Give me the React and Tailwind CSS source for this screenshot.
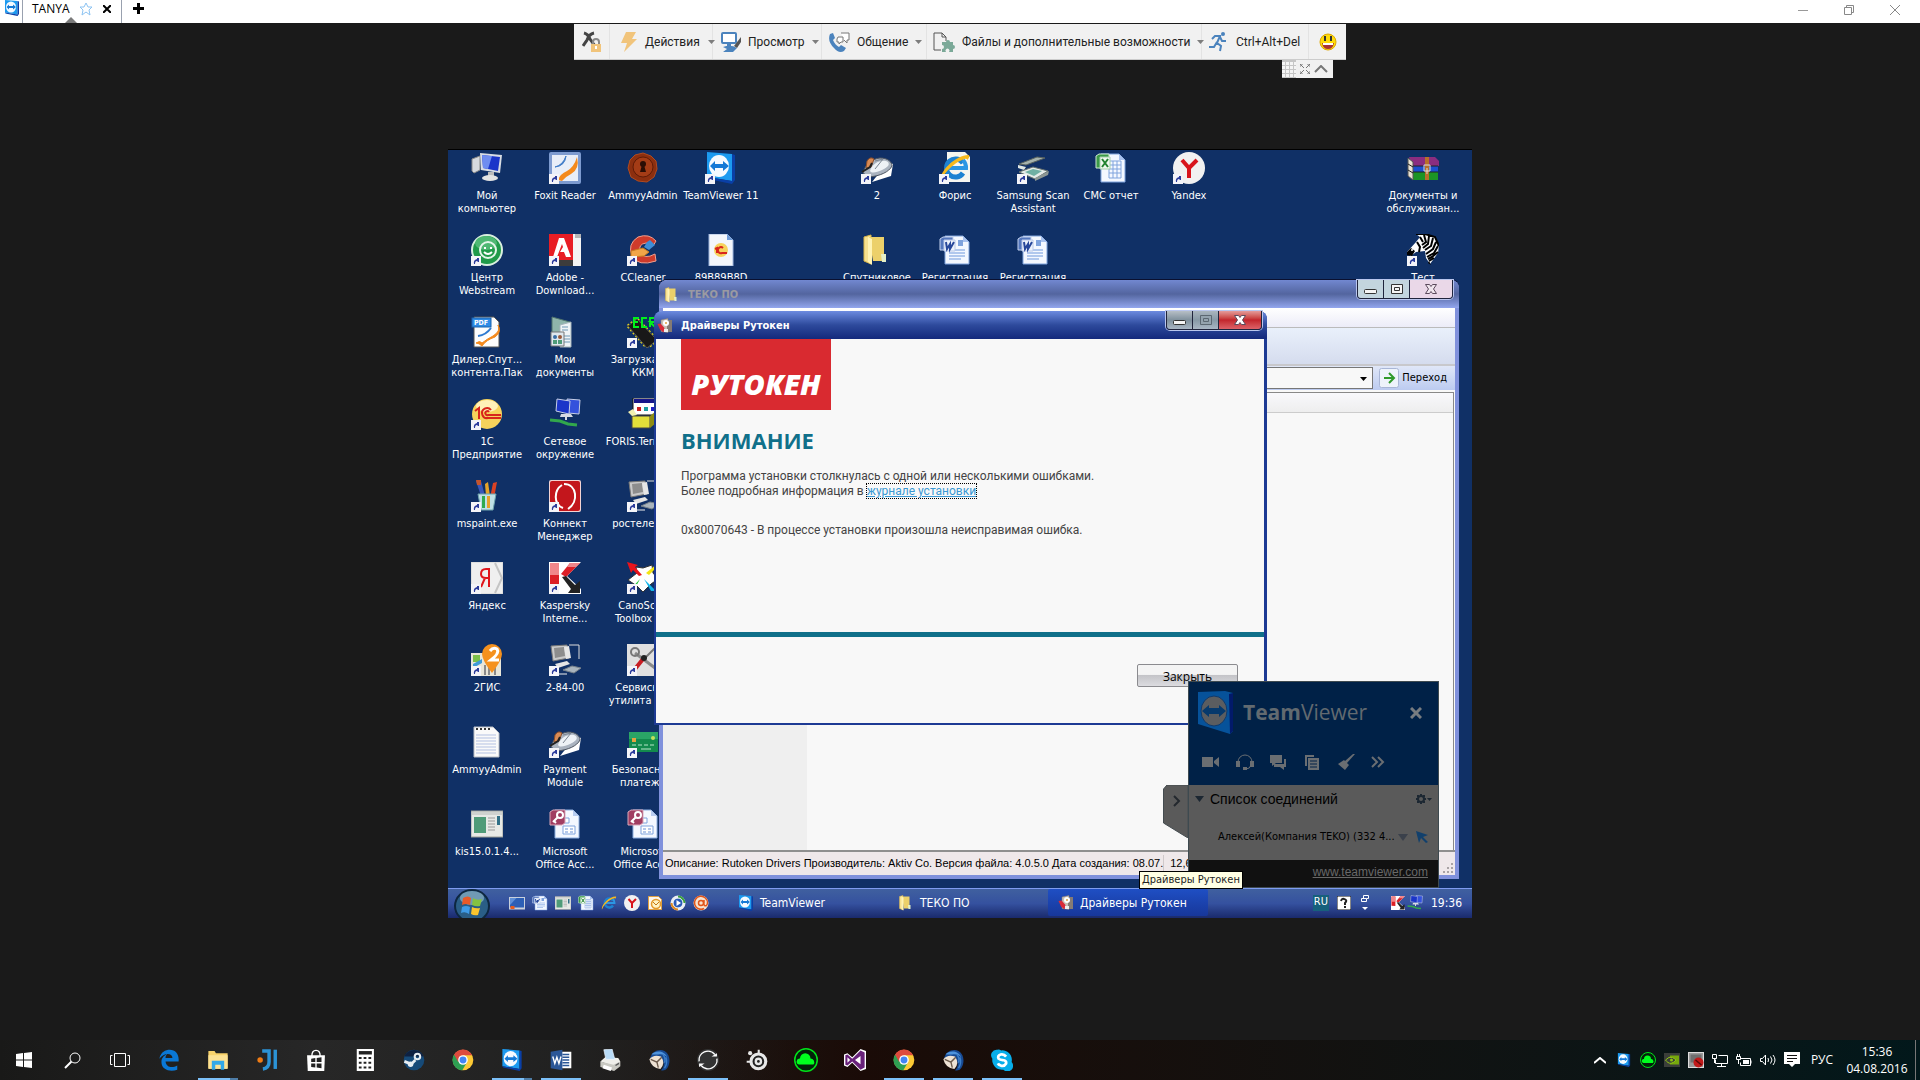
import { useState } from "react"
import { clsx } from "clsx"

const TAHOMA = "font-['DejaVu_Sans_Condensed','DejaVu_Sans',sans-serif]"
const SEGOE = "font-['Open_Sans','Noto_Sans',sans-serif]"

const AccessArt = () => (
  <>
    <path d="M6 2 h18 l6 6 v22 h-24z" fill="#f4f8ff" stroke="#8fb0e0" />
    <path d="M24 2 v6 h6z" fill="#b9cdf0" />
    <path d="M15 10 h5 v5 h-5z M14 18 h12 v8 h-12z" fill="#fff" stroke="#7fa3dd" />
    <path d="M16 21 h3 M21 21 h3 M16 24 h3 M21 24 h3" stroke="#6a93d6" />
    <path d="M1 4 l3 -2 h12 v13 l-3 2 h-12z" fill="#a13e62" stroke="#d9a7b9" />
    <circle cx="11" cy="7" r="3" fill="none" stroke="#fff" strokeWidth="2" />
    <path d="M9 9 l-5 5 m1 -1 l2 2" stroke="#fff" strokeWidth="2" />
  </>
)

const WordArt = () => (
  <>
    <path d="M6 2 h18 l6 6 v22 h-24z" fill="#f4f8ff" stroke="#7fa3dd" />
    <path d="M24 2 v6 h6z" fill="#a9c2ee" />
    <path d="M19 6 h5 v6 h-5z" fill="#7fa3dd" />
    <path d="M10 16 h16 M10 19 h16 M10 22 h16 M10 25 h12" stroke="#6f98dc" />
    <path d="M1 5 l3 -2 h10 v13 h-13z" fill="#5577bd" stroke="#c4d2ee" />
    <path d="M5 6 h11 v11 h-11z" fill="#eef3fc" stroke="#b9c8e8" />
    <path d="M7 8 l1 7 l3 -5 v5 l4 -7" fill="none" stroke="#27479b" strokeWidth="2" />
  </>
)

const ExcelArt = () => (
  <>
    <path d="M6 2 h18 l6 6 v22 h-24z" fill="#f4f8ff" stroke="#7fa3dd" />
    <path d="M24 2 v6 h6z" fill="#a9c2ee" />
    <path d="M14 9 h12 v17 h-12z M14 13 h12 M14 17 h12 M14 21 h12 M18 9 v17 M22 9 v17" fill="none" stroke="#7fa3dd" />
    <path d="M1 4 l3 -2 h10 v14 h-13z" fill="#3b9a48" stroke="#cfe8d2" />
    <path d="M5 5 h10 v12 h-10z" fill="#eef8ee" stroke="#a7d0ac" />
    <path d="M7 7 l6 8 M13 7 l-6 8" stroke="#21832f" strokeWidth="2" />
  </>
)

const MouseArt = () => (
  <>
    <path d="M11 30 l19 -6 l2 -12 l-5 -2z" fill="#fff" />
    <path d="M2 21 C4 13 10 7 19 6 C27 6 31 10 31 14 C28 20 19 24 8 25z" fill="#aab3bf" stroke="#4d5561" />
    <path d="M9 19 C11 12 18 8 25 9 C30 11 28 15 21 18 C16 20 11 22 9 19" fill="#eef2f6" />
    <path d="M14 9 l8 -2 l-8 10" fill="none" stroke="#7b8591" />
    <path d="M6 9 q3 -5 7 -2 l-3 8 l-5 1z" fill="#d98b55" stroke="#8f4f28" />
    <path d="M1 20 l8 -5 l2 -4" stroke="#222" strokeWidth="2" fill="none" />
  </>
)

const OldPcArt = () => (
  <>
    <path d="M2 2 l16 -1 l2 13 l-16 3z" fill="#c9c9c9" stroke="#777" />
    <path d="M5 4 l10 -1 l1 9 l-10 2z" fill="#8d8d8d" />
    <path d="M15 3 l5 -1 l2 12 l-5 1z" fill="#e6e6e6" />
    <path d="M20 1 h10 v14" fill="none" stroke="#dcdcdc" />
    <path d="M6 20 l12 -3 l3 3 l-12 4z" fill="#e4e4e4" />
    <path d="M14 26 l9 -4 l9 2 l-7 5z" fill="#a9b4bd" stroke="#78828b" />
    <path d="M4 30 h14" stroke="#eee" />
  </>
)

const IeArt = () => (
  <>
    <path d="M24 11 A9 9 0 1 0 24 21" fill="none" stroke="#1d82d2" strokeWidth="5" />
    <path d="M8 16 h19 a11 11 0 0 0 -3 -8" fill="none" stroke="#2c97e4" strokeWidth="4" />
    <path d="M2 29 C-1 20 18 2 30 3 C31 5 29 7 28 8 C30 3 8 13 2 29" fill="#f6b91d" />
  </>
)

const FolderArt = () => (
  <>
    <path d="M3 3 l7 -2 v29 l-7 -3z" fill="#f6e08f" stroke="#d8b54a" />
    <path d="M8 3 h15 v24 h-11z" fill="#ecd06a" />
    <path d="M7 3 l4 2 v26 l-4 -3z" fill="#fff3b5" />
    <path d="M20 20 h5 v8 h-4z" fill="#e4efc8" />
  </>
)

const RutokenArt = () => (
  <>
    <path d="M8 4 l14 -3 v28 l-14 -2z" fill="#c9bfb5" stroke="#8a7d73" />
    <path d="M20 4 h10 v24 h-10z" fill="#857b74" />
    <circle cx="18" cy="10" r="6" fill="#fff" />
    <circle cx="18" cy="10" r="2" fill="#e0a040" />
    <path d="M1 12 l6 -1 l8 9 l-2 9 l-7 -6z" fill="#d92a38" />
    <path d="M14 22 h8 v6 h-8z" fill="#eee" />
  </>
)

const KasperskyArt = () => (
  <>
    <path d="M0 0 h32 l-14 14 l14 13 v5 h-32z" fill="#fff" />
    <path d="M1 1 h9 v22 l-9 -1z M12 12 l9 -11 h10 l-14 14z" fill="#dc1f26" />
    <path d="M1 1 h9 v12 h-9z M18 5 l3 -4 h10 l-4 4z" fill="#f0868a" />
    <path d="M13 15 l4 -1 l9 9 l5 -4 v12 h-12 l3 -4z" fill="#222" />
  </>
)

const YandexArt = () => (
  <>
    <circle cx="16" cy="16" r="16" fill="#f1f1f1" />
    <path d="M9 8 L16 16 L24 8 M16 16 v10" fill="none" stroke="#d8141c" strokeWidth="4" />
  </>
)

const OneCArt = () => (
  <>
    <circle cx="16" cy="16" r="15" fill="#f6d35c" />
    <ellipse cx="16" cy="8" rx="11" ry="6" fill="#fff1b8" />
    <path d="M4 13 l4 -3 v11 M20 12 a5 5 0 1 0 -3 8 h13 M18 14 a2 2 0 1 0 -1 3 h13" fill="none" stroke="#d8251c" strokeWidth="2" />
  </>
)

const TeamViewerArt = () => (
  <>
    <path d="M2 0 l25 2 v27 l-25 -4z" fill="#1c9af0" />
    <path d="M27 2 l3 1 v25 l-3 4 l-24 -5 l-1 -2 l25 4z" fill="#0a3fa6" />
    <ellipse cx="14" cy="14" rx="10" ry="11" fill="#f5faff" />
    <path d="M5 14 l5 -5 v3 h8 v-3 l6 5 l-6 5 v-3 h-8 v3z" fill="#1479d6" />
  </>
)

const MailArt = () => (
  <>
    <path d="M3 3 h20 l6 6 v20 h-26z" fill="#fdf6ea" stroke="#e0a040" strokeWidth="2" />
    <circle cx="18" cy="18" r="9" fill="#fff3c4" stroke="#e39a2c" strokeWidth="3" />
    <path d="M12 14 l6 6 l6 -6" fill="none" stroke="#c47712" strokeWidth="2" />
  </>
)

const WindowArt = () => (
  <>
    <path d="M0 3 h32 v26 h-32z" fill="#e7e9e6" stroke="#9a9d97" />
    <path d="M1 4 h30 v3 h-30z" fill="#cfd2cf" />
    <path d="M3 9 h12 v16 h-12z" fill="#4f9b78" />
    <path d="M17 10 h7 M17 13 h7 M17 16 h7 M17 19 h7 M17 22 h7" stroke="#999" />
    <path d="M26 8 h3 v9 h-3z" fill="#2f6f86" />
  </>
)

const ThunderbirdArt = () => (
  <>
    <path d="M3 14 C5 4 16 -1 24 3 C32 8 33 18 29 26 C27 30 23 32 19 31 C25 25 23 18 20 14z" fill="#174a94" />
    <path d="M5 8 C12 1 24 3 28 12 C25 9 20 7 15 8z" fill="#4e93dc" />
    <path d="M2 15 q6 -8 17 -4 q7 10 -1 18 q-13 -1 -16 -14" fill="#eee2d4" />
    <path d="M4 15 l9 4 l7 -7 M13 19 l2 8" fill="none" stroke="#6b5a4c" strokeWidth="2" />
    <path d="M26 12 q3 8 -2 16 M22 8 q4 6 2 12" stroke="#3c7fc9" strokeWidth="2" fill="none" />
  </>
)

const ChromeArt = () => (
  <>
    <circle cx="16" cy="16" r="15" fill="#fcc934" />
    <path d="M16 16 L3 8 A15 15 0 0 0 15 31 L22 19z" fill="#2e9f52" />
    <path d="M16 9 h13 l-1 -2 A15 15 0 0 0 3 8 l6 11z" fill="#dd4b3e" />
    <circle cx="16" cy="16" r="7" fill="#fff" />
    <circle cx="16" cy="16" r="5" fill="#4285f4" />
  </>
)

const CloudArt = () => (
  <>
    <circle cx="16" cy="16" r="15" fill="#04210a" stroke="#00e41a" strokeWidth="2" />
    <path d="M7 22 a4 4 0 0 1 1 -8 a7 7 0 0 1 14 0 a5 5 0 0 1 4 8z" fill="#00ff1e" />
  </>
)

const ART = {
  computer: (
    <>
      <path d="M1 7 l8 -3 v14 l-6 3 l-2 -2z" fill="#d6d9de" stroke="#888" />
      <path d="M9 1 l22 2 l-2 18 l-19 -3z" fill="#d9dde4" />
      <path d="M11 3 l18 2 l-2 14 l-15 -3z" fill="#1b35c9" />
      <path d="M11 3 l10 1 l-4 13 l-5 -1z" fill="#6f8df0" />
      <path d="M17 20 h6 v5 h-6z" fill="#bbb" />
      <ellipse cx="19" cy="26" rx="8" ry="3" fill="#e3e3e3" />
    </>
  ),
  foxit: (
    <>
      <rect width="32" height="32" rx="2" fill="#7d9bd0" />
      <rect x="3" y="3" width="26" height="26" fill="#e8eef8" />
      <path d="M6 15 Q14 13 17 4 Q16 14 6 15" fill="#3f7cc8" stroke="#3f7cc8" />
      <path d="M9 28 Q11 22 18 19 Q25 15 28 5 Q31 17 22 22 Q16 25 13 29z" fill="#f48a1d" />
    </>
  ),
  ammyy: (
    <>
      <path d="M8 3 l8 -2 l8 3 l5 5 l1 8 l-3 8 l-7 5 l-9 -1 l-7 -4 l-3 -9 l2 -8z" fill="#8c2f0f" stroke="#b24a1e" />
      <circle cx="16" cy="15" r="10" fill="#a43c16" stroke="#5f1b06" />
      <circle cx="16" cy="12" r="3" fill="#2a0d04" />
      <path d="M15 13 h2 l2 7 h-6z" fill="#2a0d04" />
    </>
  ),
  teamviewer: <TeamViewerArt />,
  mouse: <MouseArt />,
  ie: (
    <>
      <path d="M8 0 h18 l5 5 v25 h-23z" fill="#f6f6f0" />
      <IeArt />
    </>
  ),
  scanner: (
    <>
      <path d="M2 12 l18 -7 l8 1 l-19 7z" fill="#a5b2ad" stroke="#59635f" />
      <path d="M1 13 l8 2 l-2 3 l-6 -2z" fill="#dfe6e3" />
      <path d="M2 20 l14 -5 l15 4 l-13 8z" fill="#e4ebe8" stroke="#69736f" />
      <path d="M8 20 l8 -3 l9 2 l-8 5z" fill="#6fb0a4" />
      <path d="M18 26 l14 -7 l-1 4 l-13 6z" fill="#8d9794" />
    </>
  ),
  excel: <ExcelArt />,
  yandex: <YandexArt />,
  winrar: (
    <>
      <path d="M2 5 h26 l4 4 v5 h-27z" fill="#8b2d80" />
      <path d="M4 14 h27 v6 h-26z" fill="#1d4fd0" />
      <path d="M4 20 h27 v8 h-26z" fill="#1c9425" />
      <path d="M1 6 l5 4 v18 l-5 -4z" fill="#e9e2d3" stroke="#555" />
      <path d="M1 12 l5 3 M1 18 l5 3 M6 14 h25 M6 20 h25" stroke="#222" />
      <path d="M18 5 h4 v23 h-4z" fill="#b8702a" />
      <path d="M17 13 h6 v6 h-6z M20 16 v6" fill="none" stroke="#ddd" />
    </>
  ),
  webstream: (
    <>
      <circle cx="16" cy="16" r="15" fill="#1f9a49" stroke="#d9efe0" strokeWidth="2" />
      <ellipse cx="15" cy="9" rx="11" ry="7" fill="#4fb873" />
      <circle cx="17" cy="16" r="8" fill="none" stroke="#e4f5ea" strokeWidth="2" />
      <path d="M13 18 q4 4 8 0 M14 13 v2 M20 13 v2" fill="none" stroke="#fff" strokeWidth="2" />
    </>
  ),
  adobe: (
    <>
      <rect width="32" height="32" fill="#f4f4f4" />
      <rect width="24" height="27" fill="#e81d24" />
      <path d="M4 23 L10 4 h5 L22 23 h-5 l-2 -5 h-4 l3 -5 l-1 -3 l-5 13z" fill="#fff" />
      <path d="M8 26 h16 v6 h-16z" fill="#3c3c3c" />
      <path d="M26 0 h6 v4 h-6z" fill="#b5b5b5" />
    </>
  ),
  ccleaner: (
    <>
      <path d="M29 7 Q22 -1 11 3 Q0 10 5 22 Q11 33 29 27 L28 20 Q17 26 13 18 Q11 10 19 9 Q24 9 26 12z" fill="#cf3b2b" stroke="#f0a090" />
      <path d="M17 13 l3 -5 l3 -2 l5 5 l-6 5z" fill="#3f8ed6" />
      <path d="M4 17 l12 -3 l6 4 l-5 4 l-13 1z" fill="#f1a548" stroke="#c77c20" />
    </>
  ),
  oneCFile: (
    <>
      <path d="M4 0 h18 l6 6 v26 h-24z" fill="#f3f6fb" stroke="#9fb6dd" />
      <path d="M22 0 v6 h6z" fill="#6f9bd8" />
      <circle cx="16" cy="16" r="7" fill="#f6d35c" />
      <path d="M10 15 l2 -1 v5 M18 14 a3 3 0 1 0 -1 5 h5" fill="none" stroke="#d8251c" strokeWidth="2" />
    </>
  ),
  folder: <FolderArt />,
  word: <WordArt />,
  zebra: (
    <>
      <path d="M0 18 L9 8 L13 3 L9 0 H18 L28 3 L32 11 L31 19 L23 30 L19 24 L18 17 L9 18 L4 22z" fill="#fff" />
      <path d="M13 3 l3 5 M17 1 l2 7 l-4 3 M22 2 l-1 8 l-5 4 M26 4 l-2 8 l-6 4 M29 8 l-3 7 l-7 5 M31 12 l-4 7 l-7 4 M31 18 l-6 5 l-4 2 M27 24 l-5 3 M10 8 l3 5 l-1 5 M9 0 h9 l10 3 l4 9" fill="none" stroke="#000" strokeWidth="2" />
      <path d="M0 18 l4 -4 l4 3 l-3 5 l-5 -1z M22 27 l2 4 l-3 -2z" />
      <circle cx="5" cy="16" r="1" fill="#fff" />
    </>
  ),
  pdf: (
    <>
      <path d="M3 1 h20 l5 5 v25 h-25z" fill="#fdfdfd" stroke="#555" />
      <path d="M5 27 q4 -3 6 0 q5 -4 11 -7 q8 -5 5 -11 q4 7 -3 12 q-9 3 -13 9 q-3 -3 -6 -3" fill="#f48a1d" stroke="#f48a1d" />
      <path d="M7 20 q8 -1 13 -8" stroke="#2e7ad0" strokeWidth="2" fill="none" />
      <rect x="1" y="2" width="19" height="9" fill="#2f8be6" stroke="#1b62ad" />
      <text x="3" y="9" fontSize="7" fontWeight="700" fill="#fff">PDF</text>
    </>
  ),
  docs: (
    <>
      <path d="M3 1 l18 5 v25 l-18 -4z" fill="#8fb5ab" stroke="#51756e" />
      <path d="M11 9 l11 -3 v25 h-11z" fill="#f0f4f6" stroke="#a5b4bb" />
      <path d="M13 11 h6 M13 14 h6 M15 20 h6 M15 23 h6 M15 26 h6" stroke="#6f98b5" />
      <path d="M2 16 h13 v14 h-13z" fill="#dfe8ee" stroke="#777" />
      <circle cx="6" cy="21" r="2" fill="#3a6ea5" />
      <circle cx="11" cy="21" r="2" fill="#9a5a3a" />
      <path d="M4 24 h4 v4 h-4z M9 24 h4 v4 h-4z" fill="#4f9b78" />
    </>
  ),
  chip: (
    <>
      <path d="M1 10 l9 -7 l20 21 l-10 8z" fill="#111" stroke="#e6d61b" strokeDasharray="2 2" strokeWidth="3" />
      <path d="M1 10 l9 -7 l20 21 l-10 8z" fill="#181818" stroke="#555" />
      <path d="M12 2 h-5 v9 h5 M7 6 h4 M20 2 h-5 v9 h5 M23 11 v-9 h5 v4 h-5 l5 5" fill="none" stroke="#00f01c" strokeWidth="2" />
    </>
  ),
  oneC: <OneCArt />,
  network: (
    <>
      <path d="M18 1 l13 1 l-1 14 l-11 -1z" fill="#3452dc" stroke="#c7cfe6" />
      <path d="M8 1 l13 2 l-1 13 l-13 -3z" fill="#1b35c9" stroke="#c7cfe6" />
      <path d="M12 16 h10 l2 3 h-13z" fill="#d7dbe3" />
      <path d="M1 22 l10 1 l8 3 l9 1" fill="none" stroke="#32a84c" strokeWidth="3" />
      <path d="M17 18 v4" stroke="#d7dbe3" strokeWidth="2" />
    </>
  ),
  foris: (
    <>
      <path d="M6 0 h26 v17 h-26z" fill="#fff" stroke="#111" />
      <path d="M7 1 h24 v4 h-24z" fill="#16168a" />
      <path d="M10 9 h4 v4 h-4z" fill="#c81e1e" />
      <path d="M17 9 h4 v4 h-4z" fill="#1ea0a0" />
      <path d="M24 9 h4 v4 h-4z" fill="#1e1ec8" />
      <path d="M5 18 h18 v12 h-18z" fill="#e2df3a" stroke="#444" />
      <path d="M23 18 l6 -5 v12 l-6 5z" fill="#8f8d12" />
      <path d="M5 18 l-4 -4 l5 -3 l4 6z" fill="#f2f0b0" />
    </>
  ),
  paint: (
    <>
      <path d="M5 1 h5 l4 15 h-4z" fill="#3a56b8" />
      <path d="M5 0 h5 v5 h-4z" fill="#c4542c" />
      <path d="M14 4 l3 -2 l2 14 h-4z" fill="#e6a42a" />
      <path d="M22 3 l4 -1 l-3 16 h-4z" fill="#db4224" />
      <path d="M7 14 h18 l-3 16 h-12z" fill="#bfe0e6" stroke="#6ea3ad" />
      <path d="M11 16 h3 v12 h-3z" fill="#2faa4f" />
      <path d="M16 16 h3 v12 h-3z" fill="#e7a22b" />
    </>
  ),
  connect: (
    <>
      <rect width="32" height="32" rx="2" fill="#f3d3d3" />
      <rect x="1" y="1" width="30" height="30" rx="2" fill="#c3161c" />
      <path d="M13 5 C5 10 4 24 14 28 M15 4 C28 4 30 22 19 29" fill="none" stroke="#fff" strokeWidth="2" />
    </>
  ),
  oldpc: <OldPcArt />,
  yaBrowser: (
    <>
      <rect width="32" height="32" fill="#efefef" stroke="#d0d0d0" />
      <path d="M24 1 l7 15 l-7 15" fill="none" stroke="#c4c4c4" strokeWidth="2" />
      <path d="M18 25 V7 h-3 q-5 0 -5 5 q0 4 5 4 h3 M14 16 l-4 9" fill="none" stroke="#e0161c" strokeWidth="2" />
    </>
  ),
  kaspersky: <KasperskyArt />,
  cano: (
    <>
      <path d="M1 18 l9 -7 l-1 -6 l7 1 l9 -3 l1 8 l5 6 l-7 5 l-8 8 l-6 -6z" fill="#fff" stroke="#333" />
      <path d="M0 0 l11 3 l-3 2 l7 8 l-3 1 l-6 -6 l-2 3z" fill="#e8131b" />
      <path d="M31 1 l-12 10 l3 2 l9 -9z" fill="#f3e412" />
      <path d="M17 17 l12 12 h-5z" fill="#12b4ea" />
      <path d="M13 17 l-12 13 l6 -2z" fill="#1fc933" />
    </>
  ),
  gis: (
    <>
      <path d="M0 9 h30 v23 h-30z" fill="#e9e6d9" />
      <path d="M2 11 h7 v7 h-7z" fill="#7cc04a" />
      <path d="M2 20 l9 -5 v4 l-9 5z" fill="#3f9ad8" />
      <path d="M14 31 v-10 M18 31 v-8 M24 31 v-9" stroke="#8a8a8a" strokeWidth="2" />
      <path d="M21 29 Q11 16 11 10 A10 10 0 0 1 31 10 Q31 16 21 29" fill="#f5911e" />
      <path d="M19 7 q3 -4 7 -2 q3 4 -6 11 h8" fill="none" stroke="#fff" strokeWidth="3" />
    </>
  ),
  service: (
    <>
      <rect width="32" height="32" fill="#e0e0e0" />
      <path d="M8 9 l20 15" stroke="#8a8a8a" strokeWidth="3" />
      <circle cx="8" cy="8" r="4" fill="none" stroke="#777" strokeWidth="2" />
      <path d="M28 4 l-12 12" stroke="#777" strokeWidth="2" />
      <path d="M16 15 l-8 10" stroke="#c81e24" strokeWidth="4" />
      <circle cx="17" cy="14" r="3" fill="#222" />
    </>
  ),
  notepad: (
    <>
      <path d="M3 1 h19 l6 6 v24 h-25z" fill="#fafafa" stroke="#b7bcc4" />
      <path d="M5 9 h20 M5 12 h20 M5 15 h20 M5 18 h20 M5 21 h20 M5 24 h20 M5 27 h20" stroke="#b3c1e2" />
      <path d="M5 3 h16" stroke="#333" strokeWidth="2" strokeDasharray="2 2" />
    </>
  ),
  card: (
    <>
      <path d="M2 6 h29 v20 h-29z" fill="#138a4d" />
      <path d="M2 6 h29 v7 h-29z" fill="#2aa566" />
      <path d="M5 12 h4 v4 h-4z" fill="#e5a33f" />
      <path d="M5 19 h4 M11 19 h4 M17 19 h4 M23 19 h4 M14 23 h10" stroke="#b8e6c9" />
      <circle cx="26" cy="12" r="2" fill="#c4e05c" />
    </>
  ),
  kis: <WindowArt />,
  access: <AccessArt />,
  rutoken: <RutokenArt />,
  ieOnly: <IeArt />,
  mail: <MailArt />,
  desktopIcon: (
    <>
      <path d="M0 4 h32 v25 h-32z" fill="#c8d0dc" />
      <path d="M2 6 h28 v19 h-28z" fill="#2c5fb6" />
      <path d="M2 20 l13 -14 h-13z" fill="#5e8fd8" />
      <path d="M3 22 h8 v6 h-8z" fill="#e45a1e" />
    </>
  ),
  player: (
    <>
      <circle cx="16" cy="16" r="15" fill="#e9edf2" />
      <path d="M16 1 a15 15 0 0 1 15 15 h-6 a9 9 0 0 0 -9 -9z" fill="#3da13f" />
      <path d="M16 31 a15 15 0 0 1 -15 -15 h6 a9 9 0 0 0 9 9z" fill="#e08a24" />
      <circle cx="16" cy="16" r="10" fill="#2a5bb8" stroke="#fff" strokeWidth="2" />
      <path d="M13 10 l9 6 l-9 6z" fill="#fff" />
    </>
  ),
  at: (
    <>
      <circle cx="16" cy="16" r="15" fill="#f7e3cf" />
      <path d="M22 27 a13 13 0 1 1 7 -11 q-1 7 -6 5 q-2 -2 -1 -6 v-5 M21 16 a5 5 0 1 1 -10 0 a5 5 0 1 1 10 0" fill="none" stroke="#e0561c" strokeWidth="3" />
    </>
  ),
  edge: (
    <path d="M2 14 C4 4 11 1 17 1 C26 1 31 8 30 18 H11 C12 27 21 28 28 24 V30 C19 34 5 31 5 19 C5 12 10 9 14 7 C11 9 11 12 11 13 H21 C21 5 8 5 2 14z" fill="#0a78d6" />
  ),
  explorer: (
    <>
      <path d="M2 3 h9 l2 3 h17 v22 h-28z" fill="#f9d36b" />
      <path d="M2 9 h28 v20 h-28z" fill="#fde293" />
      <path d="M7 17 h18 v13 h-5 v-7 h-8 v7 h-5z" fill="#32a9e8" />
    </>
  ),
  ji: (
    <>
      <path d="M9 3 h10 v16 q0 9 -9 10" fill="none" stroke="#2b93d6" strokeWidth="5" />
      <path d="M28 1 v28" stroke="#2b93d6" strokeWidth="5" />
      <circle cx="6" cy="16" r="4" fill="#f07c14" />
    </>
  ),
  store: (
    <>
      <path d="M10 10 q0 -8 6 -8 q6 0 6 8" fill="none" stroke="#fff" strokeWidth="2" />
      <path d="M3 9 h26 l-1 23 h-24z" fill="#fff" />
      <path d="M9 14 l6 -1 v6 h-6z M17 13 l7 -1 v7 h-7z M9 21 h6 v6 l-6 -1z M17 21 h7 v7 l-7 -1z" fill="#222" />
    </>
  ),
  calc: (
    <>
      <path d="M4 0 h25 v32 h-25z" fill="#fff" />
      <path d="M7 3 h19 v5 h-19z" fill="#222" />
      <path d="M7 13 h19 M7 20 h19 M7 27 h19" stroke="#222" strokeWidth="3" strokeDasharray="4 3" />
    </>
  ),
  steam: (
    <>
      <circle cx="16" cy="16" r="15" fill="#164a78" />
      <path d="M2 11 A15 15 0 0 1 30 11z" fill="#0e2141" />
      <circle cx="21" cy="11" r="4" fill="none" stroke="#e7edf2" strokeWidth="3" />
      <path d="M2 18 l10 4 l6 -6" fill="none" stroke="#e7edf2" strokeWidth="4" />
      <circle cx="11" cy="22" r="4" fill="#e7edf2" />
    </>
  ),
  chrome: <ChromeArt />,
  wordWin: (
    <>
      <path d="M16 4 h15 v24 h-15z" fill="#fff" />
      <path d="M18 8 h10 M18 12 h10 M18 16 h10 M18 20 h10 M18 24 h10" stroke="#2b5797" strokeWidth="2" />
      <path d="M1 4 l17 -3 v30 l-17 -3z" fill="#2b5797" />
      <path d="M4 11 l3 10 l3 -9 l3 9 l3 -10" fill="none" stroke="#fff" strokeWidth="2" />
    </>
  ),
  printer: (
    <>
      <path d="M2 18 l7 -6 l19 1 l3 5 l-9 7z" fill="#efefea" />
      <path d="M7 1 l12 -1 l4 15 h-13z" fill="#b8dbf7" stroke="#e9f4fd" />
      <path d="M2 18 l19 5 l10 -5 v7 l-9 7 l-20 -6z" fill="#c9c9c2" />
      <path d="M7 23 l12 4 l-2 5 l-12 -4z" fill="#fff" />
      <path d="M24 24 l5 -3" stroke="#555" strokeWidth="2" />
    </>
  ),
  thunderbird: <ThunderbirdArt />,
  sync: (
    <>
      <circle cx="16" cy="16" r="16" fill="#333" />
      <path d="M3 18 A13 13 0 0 1 26 8 M29 14 A13 13 0 0 1 6 24" fill="none" stroke="#fff" strokeWidth="2" />
      <path d="M21 11 h8 v-5z M11 21 h-8 v5z" fill="#fff" />
    </>
  ),
  steelseries: (
    <>
      <circle cx="18" cy="18" r="13" fill="#e8e8e8" />
      <circle cx="18" cy="18" r="7" fill="none" stroke="#222" strokeWidth="3" />
      <circle cx="18" cy="18" r="2" fill="#222" />
      <circle cx="6" cy="6" r="3" fill="#e8e8e8" />
      <path d="M17 1 h3 v7 h-3z M1 17 h6 v3 h-6z" fill="#e8e8e8" />
    </>
  ),
  cloud: <CloudArt />,
  vs: (
    <>
      <path d="M0 8 l5 -2 l7 6 l12 -12 l8 3 v26 l-8 3 l-12 -12 l-7 6 l-5 -2z" fill="#fff" />
      <path d="M2 9 l3 -1 l7 6 l12 -12 l6 3 v22 l-6 3 l-12 -12 l-7 6 l-3 -1z" fill="#68217a" />
      <path d="M5 12 l4 4 l-4 4z M24 10 v12 l-8 -6z" fill="#fff" />
    </>
  ),
  skype: (
    <>
      <path d="M9 1 a9 9 0 0 1 6 1 a14 14 0 0 1 15 17 a8 8 0 0 1 -12 11 a14 14 0 0 1 -16 -16 a8 8 0 0 1 7 -13" fill="#08aeea" />
      <path d="M22 11 q-3 -4 -8 -3 q-5 2 -3 6 q2 2 6 2 q6 1 5 5 q-3 5 -8 3 q-3 -1 -4 -3" fill="none" stroke="#fff" strokeWidth="4" />
    </>
  ),
  nvidia: (
    <>
      <rect y="2" width="32" height="28" fill="#3b3f3a" />
      <path d="M12 7 h18 v18 h-18z" fill="#76a80c" />
      <path d="M3 16 q7 -8 14 -5 q5 3 7 5 q-9 10 -16 5 q-3 -2 -5 -5" fill="#3b3f3a" stroke="#8fc413" strokeWidth="2" />
      <circle cx="15" cy="16" r="3" fill="#8fc413" />
    </>
  ),
  blocked: (
    <>
      <rect x="1" y="1" width="30" height="30" fill="#9a9a9a" stroke="#ddd" strokeWidth="2" />
      <path d="M5 5 h22 v16 h-22z" fill="#6f6f6f" />
      <circle cx="21" cy="21" r="10" fill="#c21a1a" />
      <path d="M15 16 l12 10" stroke="#5a0707" strokeWidth="3" />
    </>
  ),
}

function Icon({ name, className }) {
  return (
    <svg viewBox="0 0 32 32" className={clsx("shrink-0", className)} aria-hidden="true">
      {ART[name]}
    </svg>
  )
}

// [column, row, icon, label, is a shortcut]
const DESKTOP = [
  [1, 1, "computer", "Мой\nкомпьютер"],
  [2, 1, "foxit", "Foxit Reader", true],
  [3, 1, "ammyy", "AmmyyAdmin"],
  [4, 1, "teamviewer", "TeamViewer 11", true],
  [6, 1, "mouse", "2", true],
  [7, 1, "ie", "Форис", true],
  [8, 1, "scanner", "Samsung Scan\nAssistant", true],
  [9, 1, "excel", "СМС отчет"],
  [10, 1, "yandex", "Yandex", true],
  [13, 1, "winrar", "Документы и\nобслуживан..."],
  [1, 2, "webstream", "Центр\nWebstream", true],
  [2, 2, "adobe", "Adobe -\nDownload...", true],
  [3, 2, "ccleaner", "CCleaner", true],
  [4, 2, "oneCFile", "89B89B8D"],
  [6, 2, "folder", "Спутниковое"],
  [7, 2, "word", "Регистрация"],
  [8, 2, "word", "Регистрация"],
  [13, 2, "zebra", "Тест", true],
  [1, 3, "pdf", "Дилер.Спут...\nконтента.Пак"],
  [2, 3, "docs", "Мои\nдокументы"],
  [3, 3, "chip", "Загрузка БД\nККМ", true],
  [1, 4, "oneC", "1C\nПредприятие", true],
  [2, 4, "network", "Сетевое\nокружение"],
  [3, 4, "foris", "FORIS.Terminal"],
  [1, 5, "paint", "mspaint.exe", true],
  [2, 5, "connect", "Коннект\nМенеджер", true],
  [3, 5, "oldpc", "ростелеком", true],
  [1, 6, "yaBrowser", "Яндекс", true],
  [2, 6, "kaspersky", "Kaspersky\nInterne...", true],
  [3, 6, "cano", "CanoScan\nToolbox 5.0", true],
  [1, 7, "gis", "2ГИС", true],
  [2, 7, "oldpc", "2-84-00", true],
  [3, 7, "service", "Сервисная\nутилита ККМ", true],
  [1, 8, "notepad", "AmmyyAdmin"],
  [2, 8, "mouse", "Payment\nModule", true],
  [3, 8, "card", "Безопасные\nплатежи", true],
  [1, 9, "kis", "kis15.0.1.4..."],
  [2, 9, "access", "Microsoft\nOffice Acc..."],
  [3, 9, "access", "Microsoft\nOffice Acc..."],
]

const QUICK = ["desktopIcon", "word", "kis", "excel", "ieOnly", "yandex", "mail", "player", "at"]

const PINNED = [
  ["edge", "Edge"],
  ["explorer", "Explorer", "many"],
  ["ji", "JI"],
  ["store", "Store"],
  ["calc", "Calculator"],
  ["steam", "Steam"],
  ["chrome", "Chrome"],
  ["teamviewer", "TeamViewer", "many"],
  ["wordWin", "Word", "one"],
  ["printer", "Printer"],
  ["thunderbird", "Thunderbird"],
  ["sync", "Sync", "one"],
  ["steelseries", "SteelSeries"],
  ["cloud", "Cloud"],
  ["vs", "Visual Studio"],
  ["chrome", "Chrome", "one"],
  ["thunderbird", "Thunderbird", "one"],
  ["skype", "Skype", "one"],
]

function DesktopIcon({ item }) {
  const [col, row, icon, label, shortcut] = item
  return (
    <button type="button" className="flex flex-col items-center gap-[5px] pt-0.5 text-white" style={{ gridColumn: col, gridRow: row }}>
      <span className="relative block size-8 shrink-0">
        <Icon name={icon} className="size-8" />
        {shortcut && (
          <svg viewBox="0 0 10 10" className="absolute bottom-0 left-0 size-2.5" aria-hidden="true">
            <rect width="10" height="10" fill="#f4f4f8" />
            <path d="M3 8 q-1 -4 3 -5 v-1 h2 v4 h-1 l-1 -1 q-2 0 -2 3z" fill="#2c3c9c" />
          </svg>
        )}
      </span>
      <span className="text-[11px] leading-[13px] whitespace-pre">{label}</span>
    </button>
  )
}

function TopBar() {
  return (
    <header className={clsx("flex h-[23px] shrink-0 items-stretch bg-white text-black", SEGOE)}>
      <div className="flex w-[23px] items-start border-r border-gray-400 pl-1">
        <Icon name="teamviewer" className="size-4" />
      </div>
      <div className="relative flex w-[99px] items-center border-r border-gray-400 pr-2.5 pb-1.5 pl-[9px] text-xs">
        <span className="flex-1">TANYA</span>
        <svg viewBox="0 0 14 14" className="mr-2.5 size-3.5" fill="none" stroke="#8cc3f2">
          <path d="M7 1 l2 4 h4 l-3 3 l1 5 l-4 -3 l-4 3 l1 -5 l-3 -3 h4z" />
        </svg>
        <button type="button" aria-label="Close tab">
          <svg viewBox="0 0 8 8" className="size-2" stroke="#000" strokeWidth="2"><path d="M0 0 L8 8 M8 0 L0 8" /></svg>
        </button>
        <svg viewBox="0 0 12 6" className="absolute bottom-0 left-[42px] h-1.5 w-3" fill="#7a7a7a"><path d="M0 6 L6 0 L12 6z" /></svg>
      </div>
      <button type="button" aria-label="New tab" className="px-[11px] pb-1.5">
        <svg viewBox="0 0 11 11" className="size-[11px]" stroke="#000" strokeWidth="3"><path d="M5.5 0 v11 M0 5.5 h11" /></svg>
      </button>
      <div className="ml-auto flex items-center gap-9 pr-5 pb-1">
        <button type="button" aria-label="Minimize">
          <svg viewBox="0 0 10 10" className="size-2.5" stroke="#999"><path d="M0 5.5 h10" /></svg>
        </button>
        <button type="button" aria-label="Restore">
          <svg viewBox="0 0 10 10" className="size-2.5" fill="none" stroke="#888"><path d="M.5 2.5 h7 v7 h-7z M2.5 2 v-1.5 h7 v7 h-2" /></svg>
        </button>
        <button type="button" aria-label="Close">
          <svg viewBox="0 0 10 10" className="size-2.5" stroke="#888"><path d="M0 0 l10 10 M10 0 l-10 10" /></svg>
        </button>
      </div>
    </header>
  )
}

const Caret = () => (
  <svg viewBox="0 0 7 4" className="h-1 w-[7px] shrink-0" fill="#7d7d7d"><path d="M0 0 h7 l-3.5 4z" /></svg>
)

function ToolButton({ className, label, caret, children }) {
  return (
    <button type="button" className={clsx("flex items-center border-r border-[#e3e3e3]", className)}>
      <span className="shrink-0">{children}</span>
      {label && <span className="flex-1 text-left whitespace-nowrap">{label}</span>}
      {caret && <Caret />}
    </button>
  )
}

function Toolbar() {
  return (
    <div className="absolute top-px left-1/2 flex -translate-x-1/2 flex-col items-end font-['Roboto',sans-serif] text-xs text-[#222]">
      <div className="flex h-9 border-b border-[#ccc] bg-[#f1f1f1]">
        <ToolButton className="w-9 justify-center">
          <svg viewBox="0 0 20 22" className="h-[22px] w-5">
            <path d="M2 2 q4 1 6 6 l5 7 M12 2 q-5 1 -7 7 l-4 6" stroke="#444" strokeWidth="3" fill="none" />
            <path d="M11 14 v-3 a3 3 0 0 1 6 0 v3" fill="none" stroke="#888" strokeWidth="2" />
            <rect x="9" y="13" width="10" height="8" fill="#f1c47b" />
            <path d="M14 15 v3" stroke="#fff" strokeWidth="2" />
          </svg>
        </ToolButton>
        <ToolButton className="w-[103px] gap-2 pr-1.5 pl-[11px]" label="Действия" caret>
          <svg viewBox="0 0 16 20" className="h-5 w-4" fill="#f1c47b"><path d="M5 0 h10 l-4 7 h5 L3 20 l3 -9 h-6z" /></svg>
        </ToolButton>
        <ToolButton className="w-[109px] gap-[7px] pr-1.5 pl-2" label="Просмотр" caret>
          <svg viewBox="0 0 20 20" className="size-5">
            <rect x="1" y="1" width="14" height="10" rx="1" fill="#fff" stroke="#4b83bd" strokeWidth="2" />
            <path d="M6 12 h4 v3 h-4z M2 15 q8 -3 14 1 l-4 4 h-10 l4 -3z" fill="#4b83bd" />
            <path d="M20 5 l-7 9 l3 2 l4 -6z" fill="#555" />
          </svg>
        </ToolButton>
        <ToolButton className="w-[105px] gap-[7px] pr-1.5 pl-1.5" label="Общение" caret>
          <svg viewBox="0 0 22 20" className="h-5 w-[22px]">
            <path d="M2 2 l3 -1 l2 5 l-2 2 q2 5 6 7 l2 -2 l5 3 l-2 3 q-5 3 -10 -3 q-7 -7 -4 -14" fill="#4b83bd" />
            <path d="M13 1 h8 v7 h-2 v3 l-3 -3 M10 5 h5 v5 h-2 l-2 2 v-2 h-2 v-3z" fill="#fff" stroke="#777" />
          </svg>
        </ToolButton>
        <ToolButton className="w-[275px] gap-[7px] pr-1.5 pl-1.5" label="Файлы и дополнительные возможности" caret>
          <svg viewBox="0 0 22 20" className="h-5 w-[22px]">
            <path d="M1 1 h8 l4 4 v4 M1 1 v17 h7 M9 1 v4 h4" fill="none" stroke="#555" />
            <path d="M9 10 h4 a2 2 0 1 1 4 0 h3 v3 a2 2 0 1 1 0 4 v3 h-4 a2 2 0 1 0 -3 0 h-4 v-3 a2 2 0 1 0 0 -4z" fill="#7ba998" />
          </svg>
        </ToolButton>
        <ToolButton className="w-[107px] gap-[9px] pl-[7px]" label="Ctrl+Alt+Del">
          <svg viewBox="0 0 18 20" className="h-5 w-[18px]" fill="none" stroke="#4b83bd" strokeWidth="2">
            <circle cx="14" cy="2" r="2" fill="#4b83bd" stroke="none" />
            <path d="M3 7 l3 -3 h5 l-3 7 l4 3 l-1 5 M8 10 l-3 5 h-5 M11 5 l2 4 h4" />
          </svg>
        </ToolButton>
        <button type="button" aria-label="Feedback" className="flex w-[37px] items-center justify-center">
          <svg viewBox="0 0 18 18" className="size-[18px]">
            <circle cx="9" cy="9" r="8" fill="#ffdc0a" stroke="#e0a800" />
            <path d="M6 3 v5 M12 3 v5" stroke="#333" strokeWidth="2" />
            <path d="M3 10 h12 q-1 6 -6 6 q-5 0 -6 -6" fill="#a33" />
            <path d="M4 10 h10 v2 h-10z" fill="#fff" />
          </svg>
        </button>
      </div>
      <div className="mr-[13px] flex h-[18px] w-[51px] items-center gap-1 bg-[#f1f1f1]">
        <svg viewBox="0 0 14 18" className="h-[18px] w-3.5 shrink-0">
          <rect width="14" height="18" fill="#c6c6c6" />
          <path d="M0 3.5 h14 M0 7.5 h14 M0 11.5 h14 M0 15.5 h14" stroke="#f5f5f5" strokeWidth="3" strokeDasharray="3 1" />
        </svg>
        <svg viewBox="0 0 10 10" className="size-2.5 shrink-0" fill="none" stroke="#777"><path d="M0 3 v-3 h3 M0 0 l4 4 M10 3 v-3 h-3 M10 0 l-4 4 M0 7 v3 h3 M0 10 l4 -4 M10 7 v3 h-3 M10 10 l-4 -4" /></svg>
        <svg viewBox="0 0 14 8" className="h-2 w-3.5 shrink-0" fill="none" stroke="#777" strokeWidth="2"><path d="M1 7 L7 1 L13 7" /></svg>
      </div>
    </div>
  )
}

function WindowButtons({ active, className }) {
  return (
    <div className={clsx("absolute top-0 flex h-[19px] overflow-hidden rounded-b border border-t-0 border-[#20243c] shadow-[0_0_0_1px_#b9c6ee]", className)}>
      <button type="button" aria-label="Minimize" className={clsx("flex w-[26px] items-end justify-center border-r border-[#20243c] pb-1", active ? "bg-linear-to-b from-[#b7bfc6] via-[#7f909c] to-[#a9b6c4]" : "bg-[#c3d5de]")}>
        <svg viewBox="0 0 13 5" className="h-[5px] w-[13px]"><rect x=".5" y=".5" width="12" height="4" rx="1" fill="#f4f4f4" stroke="#333" /></svg>
      </button>
      <button type="button" aria-label="Maximize" className={clsx("flex w-[26px] items-center justify-center border-r border-[#20243c]", active ? "bg-linear-to-b from-[#aab5be] via-[#8799a6] to-[#a9b6c4]" : "bg-[#c3d5de]")}>
        <svg viewBox="0 0 12 10" className="h-2.5 w-3"><path d="M.5 .5 h11 v9 h-11z M3.5 3.5 h5 v3 h-5z" fill={active ? "#94a3ae" : "#f4f4f4"} stroke={active ? "#5c6872" : "#333"} /></svg>
      </button>
      <button type="button" aria-label="Close" className={clsx("flex w-[42px] items-center justify-center", active ? "bg-linear-to-b from-[#e39b9b] via-[#c3242c] to-[#dd6068]" : "bg-[#ead8e8]")}>
        <svg viewBox="0 0 12 10" className="h-2.5 w-3" fill={active ? "#fff" : "#f0e6ee"} stroke="#5b4a5c"><path d="M.5 .5 h4 l1.5 2 l1.5 -2 h4 l-3 4.500 l3 4.500 h-4 l-1.500 -2 l-1.500 2 h-4 l3 -4.500z" /></svg>
      </button>
    </div>
  )
}

function ExplorerWindow() {
  return (
    <section className="absolute top-[130px] left-[211px] flex h-[599px] w-[800px] flex-col rounded-t-lg border-x-4 border-b-4 border-[#8091dc] bg-[#f8f8f8] shadow-[0_-1px_0_#0a1030]">
      <div className="-mx-1 flex h-7 shrink-0 items-center gap-2 rounded-t-lg bg-linear-to-b from-[#7288d0] via-[#53659f] to-[#93a6ee] pt-0.5 pl-[5px]">
        <Icon name="folder" className="size-4" />
        <h2 className="text-[11px] font-bold text-[#9a9aa2]">ТЕКО ПО</h2>
      </div>
      <WindowButtons className="right-0.5" />
      <div className="h-5 shrink-0 border-b border-[#bbb] bg-linear-to-b from-white to-[#ececf8]" />
      <div className="h-[38px] shrink-0 border-b-2 border-[#c8c8cc] bg-linear-to-b from-[#e9f0fb] to-[#d5dcee]" />
      <div className="flex h-6 shrink-0 items-center gap-1.5 bg-linear-to-b from-[#e0e7f8] to-[#bccbf0] pr-2">
        <div className="relative h-[22px] flex-1">
          <select aria-label="Адрес" className="size-full appearance-none border border-[#777] bg-[#f8f8f8]" />
          <svg viewBox="0 0 7 4" className="absolute top-[10px] right-1.5 h-1 w-[7px]"><path d="M0 0 h7 l-3.500 4z" /></svg>
        </div>
        <button type="button" className="flex items-center gap-[3px] text-[11px] text-black">
          <svg viewBox="0 0 20 20" className="size-5">
            <rect x=".5" y=".5" width="19" height="19" rx="2" fill="#eef3fb" stroke="#a9b6d6" />
            <path d="M5 10 h9 M10 5 l5 5 l-5 5" fill="none" stroke="#2f9a2a" strokeWidth="2" />
          </svg>
          Переход
        </button>
      </div>
      <div className="mt-0.5 mr-px flex min-h-0 flex-1 border-t border-r border-[#888]">
        <div className="w-36 bg-[#efefef]" />
        <div className="flex-1 bg-[#f8f8f8]">
          <div className="h-5 border-b border-[#ccc] bg-linear-to-b from-[#f8f8fc] to-[#eee]" />
        </div>
      </div>
      <footer className="flex h-[25px] shrink-0 items-center border-t-2 border-[#8f8f8f] bg-[#efe8ea] font-['Liberation_Sans',sans-serif] text-[11px] whitespace-nowrap text-black">
        <span className="border-r border-[#d0c9cb] pl-0.5">Описание: Rutoken Drivers Производитель: Aktiv Co. Версия файла: 4.0.5.0 Дата создания: 08.07.</span>
        <span className="pl-1.5">12,6 МБ</span>
        <svg viewBox="0 0 10 10" className="mt-2 mr-0.5 ml-auto size-2.5" stroke="#a9a3a5" strokeWidth="2" strokeDasharray="2 2"><path d="M0 9 h10 M4 5 h6 M8 1 h2" /></svg>
      </footer>
    </section>
  )
}

function RutokenDialog() {
  return (
    <section className={clsx("absolute top-[161px] left-[206px] flex h-[414px] w-[613px] flex-col rounded-t-lg border-r-3 border-b-2 border-l-2 border-[#1d3a94] bg-[#f8f8f8]", SEGOE)}>
      <div className={clsx("-mr-[3px] -ml-0.5 flex h-7 shrink-0 items-center gap-2 rounded-t-lg bg-linear-to-b from-[#6d8be0] via-[#2e4a9c] to-[#14297c] pt-0.5 pl-[3px]", TAHOMA)}>
        <Icon name="rutoken" className="size-4" />
        <h1 className="text-[11px] font-bold text-white">Драйверы Рутокен</h1>
      </div>
      <WindowButtons active className="right-0.5" />
      <div className="flex-1 px-[25px] text-xs text-[#444]">
        <div className="flex h-[71px] w-[150px] items-end justify-center bg-[#d92a30] pb-2.5">
          <span className="text-[29px] leading-8 font-extrabold text-white italic">РУТОКЕН</span>
        </div>
        <h2 className="mt-3.5 text-[22px] leading-8 font-bold text-[#10708a]">ВНИМАНИЕ</h2>
        <div className="font-['Roboto',sans-serif]">
          <p className="mt-[13px] leading-[15px]">
            Программа установки столкнулась с одной или несколькими ошибками.<br />
            Более подробная информация в{" "}
            <a href="#log" className="text-[#3a98d4] underline outline outline-dotted outline-black">журнале установки</a>
          </p>
          <p className="mt-6 leading-[15px]">0x80070643 - В процессе установки произошла неисправимая ошибка.</p>
        </div>
      </div>
      <div className="flex h-[91px] shrink-0 items-start justify-end border-t-5 border-[#10708a] pt-[27px] pr-[26px]">
        <button type="button" className="h-[23px] w-[101px] rounded-xs border border-[#8b8b8f] bg-linear-to-b from-[#f4f4f4] from-45% via-[#c4c4c8] via-50% to-[#dcdce0] pt-0.5 text-xs text-black">Закрыть</button>
      </div>
    </section>
  )
}

function TeamViewerPanel() {
  const [open, setOpen] = useState(true)
  return (
    <aside className="absolute top-[531px] left-[715px] flex text-black">
      <button type="button" aria-label="Свернуть" onClick={() => setOpen(!open)} className="mt-[104px] h-[53px] w-[25px]">
        <svg viewBox="0 0 25 53" className="h-[53px] w-[25px]">
          <path d="M25 0 H4 L.5 4 V38 L25 53z" fill="#5a5a5a" stroke="#444c50" />
          <path d="M11 11 l5 5 l-5 5" fill="none" stroke="#23282e" strokeWidth="2" />
        </svg>
      </button>
      {open && (
        <div className="flex h-[207px] w-[251px] flex-col border border-[#3e4a50]">
          <div className="flex flex-1 flex-col bg-[#002147]">
            <div className="flex items-center pt-2 pr-4 pl-2">
              <svg viewBox="0 0 38 46" className="h-[46px] w-[38px]">
                <path d="M1 2 l27 -1 l8 2 v38 l-3 3 l-32 -10z" fill="#06529a" />
                <path d="M32 4 l4 -1 v38 l-3 3z" fill="#021a6a" />
                <ellipse cx="17" cy="21" rx="13" ry="15" fill="#5b5d60" stroke="#103a6c" />
                <path d="M5 21 l7 -6 v3 h10 v-3 l7 6 l-7 6 v-3 h-10 v3z" fill="#06396c" />
              </svg>
              <span className={clsx("ml-2 flex-1 text-[21px] text-[#626a70]", SEGOE)}><b>Team</b>Viewer</span>
              <button type="button" aria-label="Close">
                <svg viewBox="0 0 12 12" className="size-3" stroke="#777c80" strokeWidth="3"><path d="M1 1 l10 10 M11 1 l-10 10" /></svg>
              </button>
            </div>
            <svg viewBox="0 0 190 18" className="mt-[17px] ml-3 h-[18px] w-[190px]" fill="#6a6e72" stroke="none">
              <path d="M1 4 h11 v10 h-11z M13 8 l5 -4 v10 l-5 -4z" />
              <path d="M37 9 a7 7 0 0 1 14 0 M50 12 q-1 4 -5 4" fill="none" stroke="#6a6e72" />
              <path d="M35 8 h4 v6 h-4z M49 8 h4 v6 h-4z M42 14 h4 v3 h-4z" />
              <path d="M69 2 h12 v8 h-6 l-4 3 v-3 h-2z M83 6 h2 v8 h-2 v3 l-4 -3 h-6 v-3 h10z" />
              <path d="M104 2 h9 v2 h-7 v9 h-2z M107 5 h11 v12 h-11z" />
              <path d="M109 8 h7 M109 11 h7 M109 14 h7" stroke="#002147" />
              <path d="M154 1 l-8 9 l-2 -2 l8 -7z M143 7 l5 5 l-4 5 l-7 -6z" />
              <path d="M171 4 l5 5 l-5 5 M177 4 l5 5 l-5 5" fill="none" stroke="#6a6e72" strokeWidth="2" />
            </svg>
          </div>
          <div className="h-[75px] bg-[#5a5a5a] px-1.5">
            <div className="flex h-7 items-center text-sm">
              <svg viewBox="0 0 9 6" className="mr-1.5 h-1.5 w-[9px]" fill="#1c2732"><path d="M0 0 h9 l-4.500 6z" /></svg>
              <span className="flex-1 font-['Liberation_Sans',sans-serif]">Список соединений</span>
              <svg viewBox="0 0 16 10" className="h-2.5 w-4" fill="#1c2732">
                <circle cx="5" cy="5" r="3" fill="none" stroke="#1c2732" strokeWidth="2" />
                <path d="M4 0 h2 v2 h-2z M4 8 h2 v2 h-2z M0 4 h2 v2 h-2z M8 4 h2 v2 h-2z M1 1 h2 v2 h-2z M7 1 h2 v2 h-2z M1 7 h2 v2 h-2z M7 7 h2 v2 h-2z" />
                <path d="M11 4 h5 l-2.500 3z" />
              </svg>
            </div>
            <div className="mt-2.5 flex h-7 items-center pr-1 pl-[23px] text-[11px] whitespace-nowrap">
              <span className="flex-1">Алексей(Компания TEKO) (332 4...</span>
              <svg viewBox="0 0 10 7" className="mr-2 h-[7px] w-2.5 shrink-0" fill="#3b414b"><path d="M0 0 h10 l-5 7z" /></svg>
              <svg viewBox="0 0 12 12" className="size-3 shrink-0" fill="#12406c"><path d="M0 0 l12 4 l-5 2 l5 5 l-2 1 l-5 -5 l-2 5z" /></svg>
            </div>
          </div>
          <div className="h-[27px] bg-[#111] pt-1 pr-2.5 text-right text-xs">
            <a href="#teamviewer" className="font-['Liberation_Sans',sans-serif] text-[#686868] underline">www.teamviewer.com</a>
          </div>
        </div>
      )}
    </aside>
  )
}

function TaskButton({ icon, label, active }) {
  return (
    <button type="button" className={clsx("flex w-40 items-center gap-1.5 pl-2.5", active && "rounded-xs bg-linear-to-b from-[#1f4fc4] to-[#17379a]")}>
      <Icon name={icon} className="size-4" />
      {label}
    </button>
  )
}

function RemoteTaskbar() {
  return (
    <div className="absolute inset-x-0 bottom-0 flex h-[30px] items-stretch border-t border-[#7f9cf0] bg-linear-to-b from-[#40609f] via-[#35519f] to-[#1a2a6c] pb-0.5 text-xs text-white">
      <button type="button" aria-label="Пуск" className="ml-1.5">
        <svg viewBox="0 0 37 32" className="h-8 w-[37px]">
          <ellipse cx="18" cy="17" rx="18" ry="17" fill="#0d2740" />
          <ellipse cx="18" cy="17" rx="16" ry="15" fill="#2a5e86" />
          <ellipse cx="18" cy="9" rx="12" ry="7" fill="#8fb4c8" opacity=".7" />
          <path d="M9 9 q5 -3 8 0 l-1 7 q-4 -2 -8 0z" fill="#ea5a28" />
          <path d="M19 9 q4 3 9 1 l-2 7 q-4 1 -8 -1z" fill="#84c341" />
          <path d="M8 18 q4 -2 8 0 l-1 7 q-4 -3 -8 -1z" fill="#3f9be6" />
          <path d="M18 18 q4 2 8 1 l-2 7 q-4 1 -7 -1z" fill="#fbc62e" />
        </svg>
      </button>
      <div className="ml-[18px] flex items-center gap-[7px]">
        {QUICK.map((name) => (
          <button key={name} type="button" aria-label={name}><Icon name={name} className="size-4" /></button>
        ))}
      </div>
      <div className="ml-[19px] flex flex-1">
        <TaskButton icon="teamviewer" label="TeamViewer" />
        <TaskButton icon="folder" label="ТЕКО ПО" />
        <TaskButton icon="rutoken" label="Драйверы Рутокен" active />
      </div>
      <div className="flex items-center pr-2.5">
        <span className="mr-2 flex size-4 items-center justify-center bg-[#17607c] text-[11px]">RU</span>
        <svg viewBox="0 0 14 14" className="mr-2.5 size-3.5">
          <rect width="14" height="14" rx="1" fill="#fff" stroke="#111" />
          <path d="M4 5 q1 -3 3 -2 q4 1 1 4 v2 M7 11 h2" fill="none" stroke="#222" strokeWidth="2" />
        </svg>
        <svg viewBox="0 0 8 16" className="mr-[22px] h-4 w-2" fill="none" stroke="#fff">
          <path d="M2.500 3 v-2.500 h5 v3 h-2 M.5 3.500 h5 v3 h-5z" />
          <path d="M1 12 h6 l-3 3z" fill="#fff" stroke="none" />
        </svg>
        <Icon name="kaspersky" className="mr-0.5 size-3.5" />
        <Icon name="network" className="mr-2 size-4" />
        <time>19:36</time>
      </div>
    </div>
  )
}

function RemoteDesktop() {
  return (
    <div className={clsx("relative h-[768px] w-[1024px] shrink-0 overflow-hidden bg-[#103066] shadow-[0_-1px_0_#000]", TAHOMA)}>
      <div className="grid auto-rows-[82px] grid-cols-[repeat(13,78px)]">
        {DESKTOP.map((item) => <DesktopIcon key={item[0] + "-" + item[1]} item={item} />)}
      </div>
      <ExplorerWindow />
      <RutokenDialog />
      <RemoteTaskbar />
      <TeamViewerPanel />
      <div role="tooltip" className="absolute top-[721px] left-[691px] flex h-[18px] items-center border border-black bg-[#ffffe4] px-0.5 text-[11px] whitespace-nowrap text-[#222]">Драйверы Рутокен</div>
    </div>
  )
}

const Tray = ({ label, children }) => (
  <button type="button" aria-label={label} className="flex w-6 items-center justify-center">{children}</button>
)

function HostTaskbar() {
  return (
    <footer className={clsx("flex h-10 shrink-0 items-stretch bg-linear-to-r from-[#1c1c1b] from-30% via-[#1a0b07] via-45% to-[#02181b] text-xs text-white", SEGOE)}>
      <div className="flex flex-1 bg-linear-to-r from-[#191918] via-[#272727] via-20% to-transparent to-50%">
        <button type="button" aria-label="Start" className="flex w-12 items-center justify-center">
          <svg viewBox="0 0 16 16" className="size-4" fill="#fff"><path d="M0 2 l7 -1 v6.500 h-7z M8 1 l8 -1 v7.500 h-8z M0 8.500 h7 v6.500 l-7 -1z M8 8.500 h8 v7.500 l-8 -1z" /></svg>
        </button>
        <button type="button" aria-label="Search" className="flex w-12 items-center justify-center">
          <svg viewBox="0 0 17 17" className="size-[17px]" fill="none" stroke="#fff"><circle cx="11" cy="6" r="5" /><path d="M7.500 9.500 L1 16" strokeWidth="2" /></svg>
        </button>
        <button type="button" aria-label="Task view" className="flex w-12 items-center justify-center">
          <svg viewBox="0 0 20 16" className="h-4 w-5" fill="none" stroke="#fff"><path d="M4.500 1.500 h11 v13 h-11z M2.500 3.500 h-2 v9 h2 M17.500 3.500 h2 v9 h-2" /></svg>
        </button>
        {PINNED.map(([icon, label, state], i) => (
          <button key={i} type="button" aria-label={label} className="relative flex w-[49px] items-center justify-center">
            <Icon name={icon} className={icon === "cloud" ? "size-6" : "size-[22px]"} />
            {state && (
              <span className="absolute bottom-0 left-[5px] flex h-0.5 w-10 bg-[#7cc0f8]">
                {state === "many" && <span className="ml-auto w-2 bg-[#4e7da6]" />}
              </span>
            )}
          </button>
        ))}
      </div>
      <div className="flex">
        <Tray label="Show hidden icons">
          <svg viewBox="0 0 12 7" className="h-[7px] w-3" fill="none" stroke="#fff" strokeWidth="2"><path d="M0 6 L6 1 L12 6" /></svg>
        </Tray>
        <Tray label="TeamViewer"><Icon name="teamviewer" className="size-3.5" /></Tray>
        <Tray label="Cloud"><Icon name="cloud" className="size-4" /></Tray>
        <Tray label="NVIDIA"><Icon name="nvidia" className="size-4" /></Tray>
        <Tray label="Safely remove"><Icon name="blocked" className="size-4" /></Tray>
        <Tray label="Network">
          <svg viewBox="0 0 16 14" className="h-3.5 w-4" fill="none" stroke="#fff"><path d="M6.500 2.500 h9 v8 h-12 v-4 M.5 1.500 h4 v4 h-4z M2.500 6 v4 M9.500 11 v2 M5 13.500 h9" /></svg>
        </Tray>
        <Tray label="Battery">
          <svg viewBox="0 0 16 12" className="h-3 w-4" fill="none" stroke="#fff"><path d="M5 4.500 h9.500 v7 h-10 v-3 M15 6.500 v3 M.5 2.500 h4 v3 h-4z M1.500 0 v2 M3.500 0 v2 M2.500 6 v4" /><path d="M7 6 h6 v4 h-6z" fill="#fff" stroke="none" /></svg>
        </Tray>
        <Tray label="Volume">
          <svg viewBox="0 0 16 12" className="h-3 w-4" fill="none" stroke="#fff"><path d="M.5 4.500 h2 l3 -3.500 v10 l-3 -3.500 h-2z M8 4 q1 2 0 4 M10.500 2.500 q3 3.500 0 7 M13 1 q4 5 0 10" /></svg>
        </Tray>
        <Tray label="Notifications">
          <svg viewBox="0 0 16 16" className="size-4"><path d="M0 0 h16 v12 h-5 l-3 3 l-3 -3 h-5z" fill="#fff" /><path d="M3 3.500 h10 M3 6.500 h10 M3 9.500 h6" stroke="#111" /></svg>
        </Tray>
        <button type="button" className="w-9 text-center">РУС</button>
        <div className="flex w-[74px] flex-col items-center justify-center leading-[17px]">
          <time>15:36</time>
          <time>04.08.2016</time>
        </div>
        <button type="button" aria-label="Show desktop" className="ml-px w-[5px] border-l border-[#777]" />
      </div>
    </footer>
  )
}

function App() {
  return (
    <div className="flex h-screen flex-col overflow-hidden bg-[#1a1a1a]">
      <TopBar />
      <main className="relative flex min-h-0 flex-1 items-center justify-center pt-[5px]">
        <Toolbar />
        <RemoteDesktop />
      </main>
      <HostTaskbar />
    </div>
  )
}

export default App
